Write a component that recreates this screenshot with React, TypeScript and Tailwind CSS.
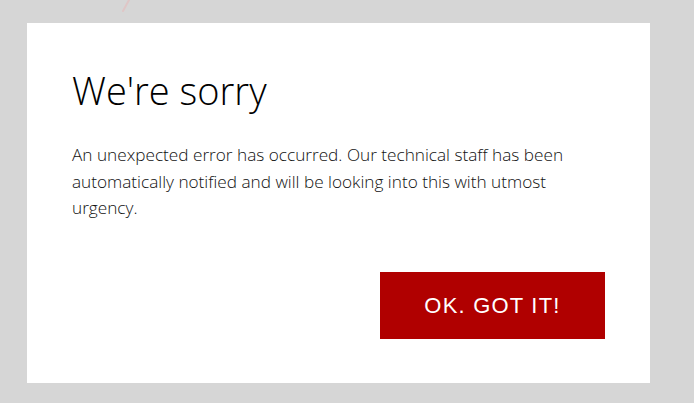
export default function App() {
  return (
    <div className="relative w-full h-[403px] overflow-hidden bg-[#d6d6d6] pt-[23px] pl-[27px]">
      {/* faint stroke from the page behind */}
      <svg className="absolute left-[118px] top-0" width="16" height="14" viewBox="0 0 16 14">
        <line x1="11" y1="0" x2="5" y2="11" stroke="#dfc6c6" strokeWidth="2" strokeLinecap="round" />
      </svg>

      <div className="w-[623px] h-[360px] bg-white px-[45px] pt-[39px] flex flex-col" style={{ fontFamily: "'Open Sans', 'Noto Sans', sans-serif" }}>
        <h1 className="text-[38px] leading-[56px] font-light text-black">We're sorry</h1>

        <p className="mt-[24px] text-[17.2px] leading-[26.5px] font-light text-[#111]">
          An unexpected error has occurred. Our technical staff has been
          <br />
          automatically notified and will be looking into this with utmost
          <br />
          urgency.
        </p>

        <div className="mt-auto mb-[44px] flex justify-end">
          <button
            className="w-[225px] h-[67px] bg-[#b00000] text-white text-[22px] tracking-[1.2px] uppercase"
            style={{ fontFamily: "'Liberation Sans', Arial, sans-serif" }}
          >
            OK. Got it!
          </button>
        </div>
      </div>
    </div>
  );
}
